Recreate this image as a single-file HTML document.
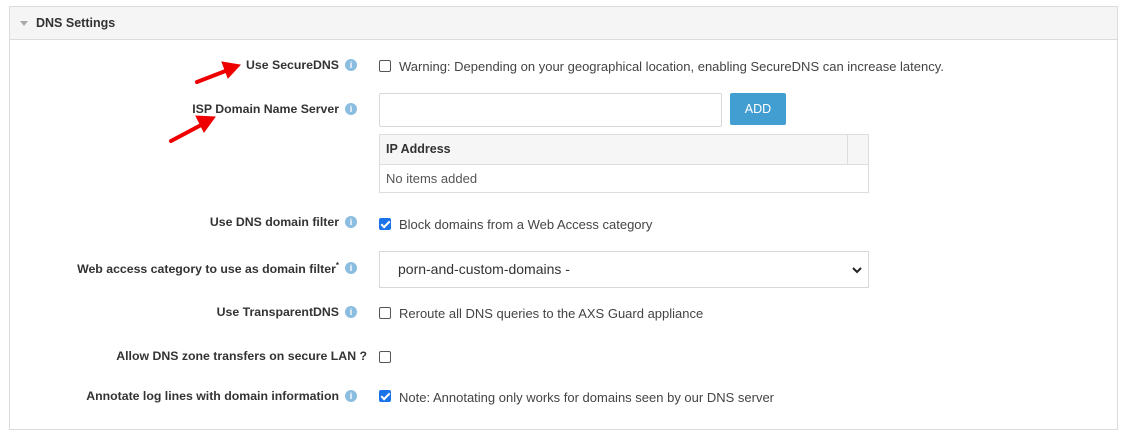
<!DOCTYPE html><html><head><style>
body{margin:0;background:#fff;font-family:"Liberation Sans",sans-serif;font-size:12.5px;color:#333;width:1127px;height:435px;position:relative;overflow:hidden}
.panel{position:absolute;left:9px;top:6px;width:1109px;height:424px;border:1px solid #dcdcdc;box-sizing:border-box}
.hdr{height:32px;background:#f5f5f5;border-bottom:1px solid #dcdcdc;font-weight:bold;line-height:32px;padding-left:26px;position:relative;color:#333}
.hdr:before{content:"";position:absolute;left:10px;top:14px;border-left:4px solid transparent;border-right:4px solid transparent;border-top:5px solid #aaa}
.lbl{position:absolute;right:788px;font-weight:bold;white-space:nowrap;color:#333;font-size:12.3px}
.i{position:absolute;left:345px;width:12px;height:12px;border-radius:50%;background:#8bbde0;color:#fff;font-size:9px;font-weight:bold;text-align:center;line-height:12px}
.cb{position:absolute;left:379px;width:12px;height:12px;border:1px solid #555;border-radius:2px;box-sizing:border-box;background:#fff}
.cb.on{background:#1a73e8;border-color:#1a73e8}
.cb.on:after{content:"";position:absolute;left:3px;top:0px;width:3px;height:7px;border:solid #fff;border-width:0 2px 2px 0;transform:rotate(45deg)}
.t{position:absolute;left:399px;white-space:nowrap;color:#444;font-size:13px}
</style></head><body>
<div class="panel"><div class="hdr">DNS Settings</div></div>

<div class="lbl" style="top:58px">Use SecureDNS</div><div class="i" style="top:59px">i</div>
<div class="cb" style="top:60px"></div><div class="t" style="top:59px">Warning: Depending on your geographical location, enabling SecureDNS can increase latency.</div>

<div class="lbl" style="top:102px">ISP Domain Name Server</div><div class="i" style="top:103px">i</div>
<div style="position:absolute;left:379px;top:93px;width:343px;height:34px;border:1px solid #d8d8d8;border-radius:2px;box-sizing:border-box"></div>
<div style="position:absolute;left:730px;top:93px;width:56px;height:32px;background:#429ed1;border-radius:2px;color:#fff;text-align:center;line-height:32px;font-size:12.5px">ADD</div>
<div style="position:absolute;left:379px;top:134px;width:490px;height:59px;border:1px solid #ddd;box-sizing:border-box">
<div style="height:29px;background:#f5f6f5;border-bottom:1px solid #ddd;font-weight:bold;line-height:29px;padding-left:6px;position:relative">IP Address<div style="position:absolute;right:20px;top:0;height:29px;border-left:1px solid #ddd"></div></div>
<div style="line-height:28px;padding-left:6px;color:#555;font-size:13px">No items added</div></div>

<div class="lbl" style="top:215px">Use DNS domain filter</div><div class="i" style="top:216px">i</div>
<div class="cb on" style="top:218px"></div><div class="t" style="top:217px">Block domains from a Web Access category</div>

<div class="lbl" style="top:261px">Web access category to use as domain filter<sup style="font-size:8px">*</sup></div><div class="i" style="top:262px">i</div>
<div style="position:absolute;left:379px;top:251px;width:490px;height:37px;border:1px solid #d8d8d8;box-sizing:border-box;line-height:35px;padding-left:18px;font-size:14px;color:#333">porn-and-custom-domains -<svg style="position:absolute;right:6px;top:14px" width="10" height="8"><path d="M1 2 L5 6 L9 2" stroke="#222" stroke-width="2" fill="none"/></svg></div>

<div class="lbl" style="top:305px">Use TransparentDNS</div><div class="i" style="top:306px">i</div>
<div class="cb" style="top:307px"></div><div class="t" style="top:306px">Reroute all DNS queries to the AXS Guard appliance</div>

<div class="lbl" style="top:349px;right:760px">Allow DNS zone transfers on secure LAN ?</div>
<div class="cb" style="top:351px"></div>

<div class="lbl" style="top:389px">Annotate log lines with domain information</div><div class="i" style="top:390px">i</div>
<div class="cb on" style="top:390px"></div><div class="t" style="top:390px">Note: Annotating only works for domains seen by our DNS server</div>

<svg style="position:absolute;left:0;top:0" width="1127" height="435">
<g fill="#e00" stroke="#e00" stroke-width="4" stroke-linecap="round">
<line x1="197" y1="82" x2="228" y2="70"/><polygon points="240,65 222,62 228,78" stroke-width="1"/>
<line x1="171" y1="141" x2="203" y2="124"/><polygon points="215,117 196,116 204,132" stroke-width="1"/>
</g></svg>
</body></html>
